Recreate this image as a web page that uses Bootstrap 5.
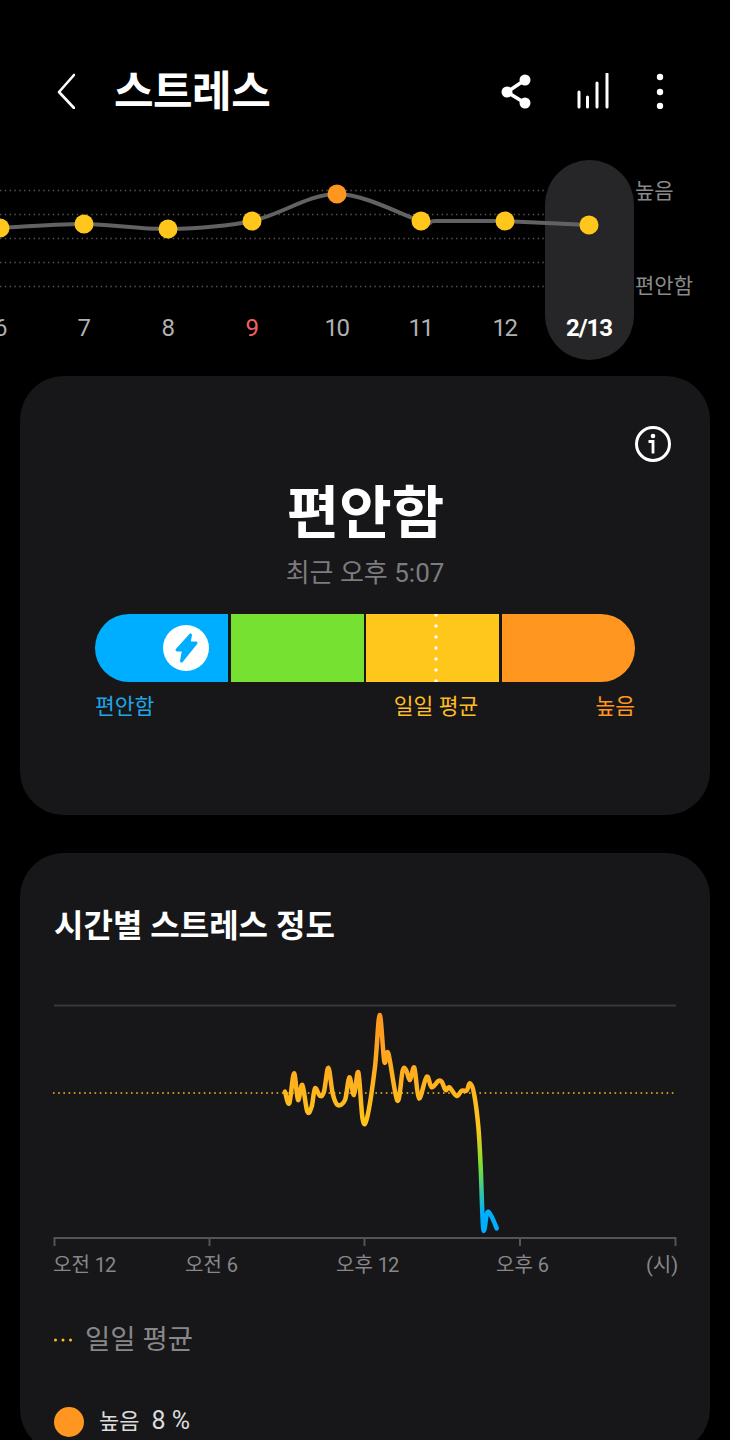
<!DOCTYPE html>
<html lang="ko">
<head>
  <meta charset="UTF-8">
  <title>스트레스</title>
  <link href="https://cdn.jsdelivr.net/npm/bootstrap@5.3.3/dist/css/bootstrap.min.css" rel="stylesheet">
  <style>
    html, body { background: #000; }
    body { height: 1440px; overflow: hidden; font-family: Roboto, "Noto Sans CJK KR", sans-serif; color: #fff; }
    svg { display: block; }
    svg text { font-family: Roboto, "Noto Sans CJK KR", sans-serif; }

    .top-bar { height: 160px; padding: 73px 63px 0 57px; }
    .top-title { font-size: 43px; font-weight: 700; line-height: 38px; margin: 0 0 0 39px; letter-spacing: -0.5px; }
    .icon-bars { margin-left: 44px; }
    .icon-more { margin-left: 43px; }

    .panel { background: #171719; border-radius: 44px; margin: 0 20px; }
    .panel-now { height: 439px; margin-top: 16px; padding: 49px 38px 0 75px; }
    .panel-hour { height: 600px; margin-top: 38px; padding: 50px 34px 0; }

    .now-title { font-size: 57px; font-weight: 700; line-height: 72px; margin: 15px 36px 0 0; }
    .now-sub { font-size: 26px; line-height: 36px; color: #7c7c7e; margin: 5px 37px 23px 0; }

    .level-bar { width: 540px; height: 68px; border-radius: 34px; overflow: hidden; display: grid; grid-template-columns: repeat(4, 1fr); gap: 2.5px; }
    .seg-blue { background: #00aeff; padding-right: 19px; }
    .seg-green { background: #77e131; }
    .seg-yellow { background: #ffc61c; }
    .seg-orange { background: #ff9620; }
    .bolt-dot { width: 46px; height: 46px; border-radius: 50%; background: #fff; }
    .avg-dots { position: absolute; left: 339px; top: 0; }

    .level-labels { width: 540px; display: grid; grid-template-columns: repeat(4, 1fr); font-size: 21.5px; line-height: 26px; margin-top: 12px; }
    .lbl-blue { color: #1fa6e6; }
    .lbl-yellow { color: #ffbd22; grid-column: 3; padding-left: 7px; white-space: nowrap; }
    .lbl-orange { color: #ff9620; grid-column: 4; }

    .hour-title { font-size: 32px; font-weight: 700; line-height: 46px; margin: 0 0 51px; }
    .hour-legend { font-size: 27.5px; line-height: 38px; color: #87878a; margin-top: 36px; gap: 12px; }
    .hour-stat { font-size: 22px; line-height: 30px; color: #dcdcdc; margin-top: 47px; gap: 15px; }
    .stat-num { font-size: 25px; margin-left: 12px; }
    .stat-dot { width: 30px; height: 30px; border-radius: 50%; background: #ff9620; }
  </style>
</head>
<body>

  <!-- 상단 바 -->
  <div class="top-bar d-flex align-items-start">
    <svg width="18" height="36" viewBox="0 0 18 36"><path d="M17 2 L2 19 L17 35" fill="none" stroke="#fff" stroke-width="2.6" stroke-linecap="round" stroke-linejoin="round"/></svg>
    <h1 class="top-title">스트레스</h1>
    <div class="d-flex ms-auto">
      <svg width="32" height="36" viewBox="0 0 32 36">
        <path d="M25 7 L7 19 L25 30" fill="none" stroke="#fff" stroke-width="3.6"/>
        <circle cx="25" cy="7" r="5.5" fill="#fff"/><circle cx="7" cy="19" r="5.5" fill="#fff"/><circle cx="25" cy="30" r="5.5" fill="#fff"/>
      </svg>
      <svg class="icon-bars" width="34" height="36" viewBox="0 0 34 36">
        <path d="M3 19 V34 M11.5 24 V34 M21 10 V34 M31 1 V34" stroke="#fff" stroke-width="3" stroke-linecap="round"/>
      </svg>
      <svg class="icon-more" width="14" height="36" viewBox="0 0 14 36">
        <circle cx="7" cy="4" r="3.2" fill="#fff"/><circle cx="7" cy="19" r="3.2" fill="#fff"/><circle cx="7" cy="33" r="3.2" fill="#fff"/>
      </svg>
    </div>
  </div>

  <!-- 주간 추이 -->
  <svg width="730" height="200" viewBox="0 160 730 200">
    <g stroke="#555" stroke-width="1.4" stroke-dasharray="1.4 3.4">
      <path d="M0 190.5H545M0 214.5H545M0 238.5H545M0 262.5H545M0 286.5H545"/>
    </g>
    <rect x="545" y="160" width="89" height="200" rx="44.5" fill="#262628"/>
    <path id="trend-line" fill="none" stroke="#626262" stroke-width="4"/>
    <g id="trend-dots"></g>
    <g font-size="24" fill="#b0b0b0" text-anchor="middle" letter-spacing="-1.5">
      <text x="0" y="336">6</text>
      <text x="83.5" y="336">7</text>
      <text x="167.5" y="336">8</text>
      <text x="251.5" y="336" fill="#f2635f">9</text>
      <text x="336.5" y="336">10</text>
      <text x="420.5" y="336">11</text>
      <text x="504.5" y="336">12</text>
      <text x="589" y="336" fill="#fff" font-weight="700" letter-spacing="-1">2/13</text>
    </g>
    <g font-size="21" fill="#8a8a8a">
      <text x="635" y="198">높음</text>
      <text x="635" y="293">편안함</text>
    </g>
  </svg>

  <!-- 현재 상태 -->
  <div class="panel panel-now">
    <div class="d-flex justify-content-end">
      <svg width="38" height="38" viewBox="0 0 38 38">
        <circle cx="19" cy="19" r="16.5" fill="none" stroke="#fff" stroke-width="3"/>
        <circle cx="19" cy="11" r="2.3" fill="#fff"/>
        <path d="M14.5 16.5H19V28.5" fill="none" stroke="#fff" stroke-width="2.8"/>
      </svg>
    </div>
    <h2 class="now-title text-center">편안함</h2>
    <p class="now-sub text-center">최근 오후 5:07</p>
    <div class="position-relative">
      <div class="level-bar">
        <div class="seg-blue d-flex align-items-center justify-content-end">
          <div class="bolt-dot d-flex align-items-center justify-content-center">
            <svg width="30" height="34" viewBox="0 0 30 34"><path d="M19.5 4 L6 19 H12.5 L10.5 30 L25 12 H18 Z" fill="#00aeff" stroke="#00aeff" stroke-width="3" stroke-linejoin="round"/></svg>
          </div>
        </div>
        <div class="seg-green"></div>
        <div class="seg-yellow"></div>
        <div class="seg-orange"></div>
      </div>
      <svg class="avg-dots" width="4" height="68" viewBox="0 0 4 68">
        <path d="M2 1V68" stroke="#fff" stroke-width="3.4" stroke-linecap="round" stroke-dasharray="0 11"/>
      </svg>
    </div>
    <div class="level-labels">
      <span class="lbl-blue">편안함</span>
      <span class="lbl-yellow text-center">일일 평균</span>
      <span class="lbl-orange text-end">높음</span>
    </div>
  </div>

  <!-- 시간별 -->
  <div class="panel panel-hour">
    <h2 class="hour-title">시간별 스트레스 정도</h2>
    <svg width="622" height="285" viewBox="54 1000 622 285" style="overflow:visible">
      <defs>
        <linearGradient id="stress-grad" gradientUnits="userSpaceOnUse" x1="0" y1="1015" x2="0" y2="1228">
          <stop offset="0" stop-color="#ff9620"/>
          <stop offset=".3" stop-color="#ffb01e"/>
          <stop offset=".53" stop-color="#ffc61c"/>
          <stop offset=".71" stop-color="#77e131"/>
          <stop offset=".93" stop-color="#00aeff"/>
        </linearGradient>
      </defs>
      <path d="M54 1005.5H676" stroke="#38383a" stroke-width="2"/>
      <path d="M53 1093H677" stroke="#ffbd22" stroke-width="1.6" stroke-dasharray="1.6 3.6"/>
      <path d="M54.5 1246V1238H675.5V1246M209.5 1238V1246M364.5 1238V1246M520 1238V1246" fill="none" stroke="#545456" stroke-width="2"/>
      <path id="hour-line" fill="none" stroke="url(#stress-grad)" stroke-width="4.5" stroke-linecap="round" stroke-linejoin="round"/>
      <g font-size="20" fill="#87878a">
        <text x="53" y="1272">오전 <tspan letter-spacing="-1">12</tspan></text>
        <text x="185" y="1272">오전 6</text>
        <text x="336" y="1272">오후 <tspan letter-spacing="-1">12</tspan></text>
        <text x="496" y="1272">오후 6</text>
        <text x="646" y="1272">(시)</text>
      </g>
    </svg>
    <div class="hour-legend d-flex align-items-center">
      <svg width="19" height="4" viewBox="0 0 19 4"><path d="M1.5 2H18" stroke="#ffbd22" stroke-width="3" stroke-linecap="round" stroke-dasharray="0 7.5"/></svg>
      <span>일일 평균</span>
    </div>
    <div class="hour-stat d-flex align-items-center">
      <span class="stat-dot"></span>
      <span>높음<span class="stat-num">8 %</span></span>
    </div>
  </div>

  <script>
    // 점들을 부드러운 곡선으로 연결
    function smooth(pts) {
      let d = `M${pts[0][0]} ${pts[0][1]}`;
      for (let i = 0; i < pts.length - 1; i++) {
        const p0 = pts[i - 1] || pts[i], p1 = pts[i], p2 = pts[i + 1], p3 = pts[i + 2] || p2;
        const c1x = p1[0] + (p2[0] - p0[0]) / 6, c1y = p1[1] + (p2[1] - p0[1]) / 6;
        const c2x = p2[0] - (p3[0] - p1[0]) / 6, c2y = p2[1] - (p3[1] - p1[1]) / 6;
        d += ` C${c1x} ${c1y} ${c2x} ${c2y} ${p2[0]} ${p2[1]}`;
      }
      return d;
    }

    const week = [[0, 228], [84, 224], [168, 229], [252, 221], [337, 194], [421, 221], [505, 221], [589, 225]];
    // 11~12 구간은 평평하게 보이도록 보조점을 넣는다
    const weekLine = [...week.slice(0, 6), [436, 221], [490, 221], ...week.slice(6)];
    document.getElementById('trend-line').setAttribute('d', smooth(weekLine));
    document.getElementById('trend-dots').innerHTML = week.map((p, i) =>
      `<circle cx="${p[0]}" cy="${p[1]}" r="9.5" fill="${i === 4 ? '#ff9620' : '#ffc61c'}"/>`).join('');

    const raw = [[45,275],[58,310],[72,220],[84,300],[97,255],[112,335],[125,320],[135,265],[150,288],[162,275],[175,203],[188,280],[203,315],[225,300],[238,232],[252,285],[265,217],[278,358],[292,350],[315,200],[329,45],[343,185],[355,160],[382,302],[398,212],[408,210],[420,240],[433,203],[447,295],[470,230],[485,262],[505,243],[515,245],[527,270],[538,262],[560,288],[575,272],[590,272],[600,250],[612,280],[625,380],[632,500],[640,688],[652,637],[665,650],[680,685]];
    document.getElementById('hour-line').setAttribute('d', smooth(raw.map(p => [270 + p[0] / 3, 1000 + p[1] / 3])));
  </script>
  <script src="https://cdn.jsdelivr.net/npm/bootstrap@5.3.3/dist/js/bootstrap.bundle.min.js"></script>
</body>
</html>
